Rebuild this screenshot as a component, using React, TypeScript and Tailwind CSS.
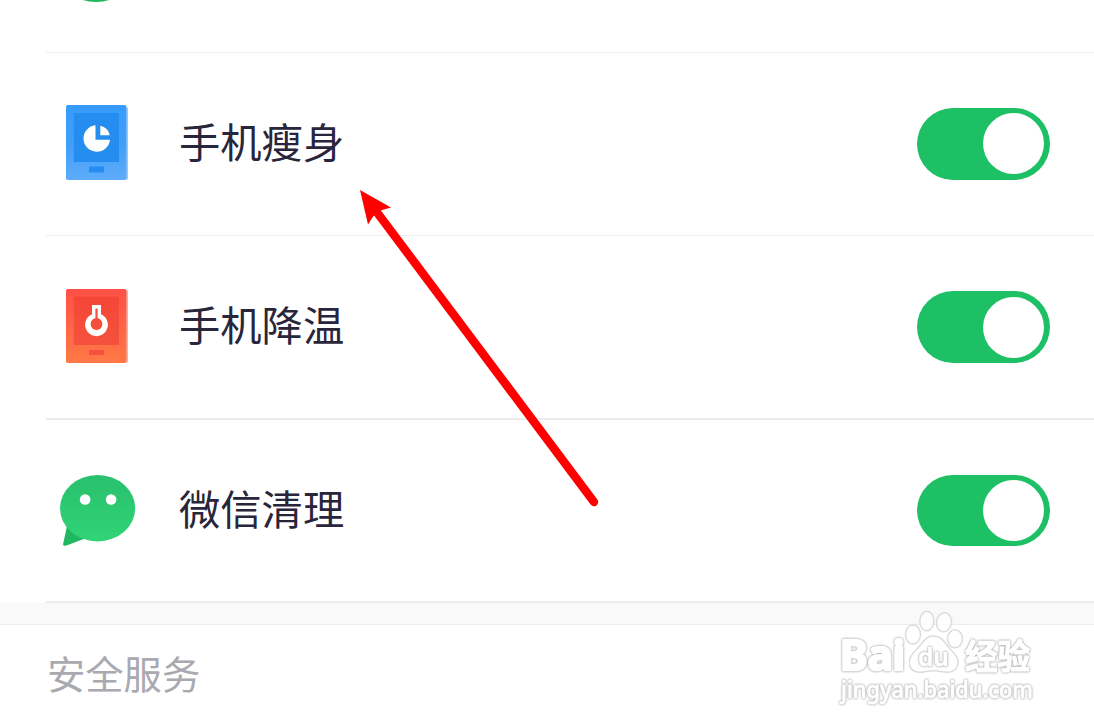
import type { ReactNode } from "react";

function SlimIcon() {
  return (
    <svg className="relative -top-px" width="62" height="75" viewBox="0 0 62 75">
      <defs>
        <linearGradient id="slim" x1="0" y1="0" x2="0" y2="1">
          <stop offset="0" stopColor="#369bfd" />
          <stop offset="0.55" stopColor="#429ffa" />
          <stop offset="1" stopColor="#5eacfa" />
        </linearGradient>
      </defs>
      <rect x="2" y="2" width="60" height="72.5" rx="1.5" fill="#91c7fd" />
      <rect width="60.3" height="75" rx="1.8" fill="url(#slim)" />
      <rect x="7.8" y="8" width="45.2" height="49" fill="#268df0" />
      <rect x="23" y="61.5" width="15" height="6" fill="#268df0" />
      <path d="M29.5 20.2A13.3 13.3 0 1 0 44 34.8H29.5Z" fill="#fff" />
      <path d="M34.3 20.7A11.5 11.5 0 0 1 43.7 30.3H34.3Z" fill="#fff" />
    </svg>
  );
}

function CoolIcon() {
  return (
    <svg className="relative -top-px" width="62" height="74" viewBox="0 0 62 74">
      <defs>
        <linearGradient id="cool" x1="0" y1="0" x2="0" y2="1">
          <stop offset="0" stopColor="#ff5047" />
          <stop offset="1" stopColor="#ff7945" />
        </linearGradient>
        <linearGradient id="coolScreen" x1="0" y1="0" x2="0" y2="1">
          <stop offset="0" stopColor="#f54638" />
          <stop offset="1" stopColor="#f5523d" />
        </linearGradient>
      </defs>
      <rect x="2" y="1" width="60" height="72.5" rx="1.5" fill="#ffaaa0" />
      <rect width="60.3" height="74" rx="1.8" fill="url(#cool)" />
      <rect x="7.8" y="7.5" width="45.2" height="48.5" fill="url(#coolScreen)" />
      <rect x="23" y="61" width="15" height="5" fill="#f5523d" />
      <path d="M26 16H35V25.3A11.4 11.4 0 1 1 26 25.3Z" fill="#fff" />
      <circle cx="30.5" cy="35" r="5.9" fill="#f54e3c" />
      <path d="M30.5 19.5V31" stroke="#f54e3c" strokeWidth="2.2" />
    </svg>
  );
}

function WechatIcon() {
  return (
    <svg className="relative left-px" width="76" height="72" viewBox="0 0 76 72">
      <defs>
        <linearGradient id="chat" x1="0" y1="0" x2="0" y2="1">
          <stop offset="0" stopColor="#29c06c" />
          <stop offset="1" stopColor="#30d477" />
        </linearGradient>
      </defs>
      <path d="M7 51L3 69.5Q3.500 71.500 6.500 70.500L25 63.5Z" fill="#21b660" />
      <ellipse cx="37.6" cy="33.2" rx="37.6" ry="33.2" fill="url(#chat)" />
      <circle cx="25.1" cy="24.5" r="5.3" fill="#fff" />
      <circle cx="51.1" cy="24.5" r="5.3" fill="#fff" />
    </svg>
  );
}

function Toggle({ size = "h-[72px]" }: { size?: string }) {
  return (
    <button
      role="switch"
      aria-checked="true"
      className={`flex w-[133px] shrink-0 items-center justify-end rounded-full bg-[#1dc064] pr-1.5 ${size}`}
    >
      <span className="size-[61px] rounded-full bg-white" />
    </button>
  );
}

interface RowProps {
  icon: ReactNode;
  label: string;
  className: string;
  toggleSize?: string;
}

function Row({ icon, label, className, toggleSize }: RowProps) {
  return (
    <div className={`ml-[46px] flex items-center border-[#ececec] pr-11 ${className}`}>
      <div className="flex w-[102px] shrink-0 justify-center">{icon}</div>
      <span className="ml-[31px] flex-1 pb-2 text-[41.3px] leading-[60px] text-[#29263b]">{label}</span>
      <Toggle size={toggleSize} />
    </div>
  );
}

function Watermark() {
  return (
    <svg className="absolute left-[820px] top-[600px]" width="240" height="120" viewBox="820 600 240 120">
      <g fill="#fff" fillOpacity="0.8" stroke="#dcdcdc" strokeWidth="1.5" strokeLinejoin="round">
        <ellipse cx="913" cy="634.5" rx="7.5" ry="9.5" />
        <ellipse cx="926.8" cy="621" rx="7" ry="9.8" />
        <ellipse cx="944" cy="622.3" rx="7.5" ry="9.6" transform="rotate(8 944 622.3)" />
        <ellipse cx="955" cy="638.8" rx="7.5" ry="9" />
        <path d="M933.5 636C925 636 923 643 917 649C911 655 908.5 659 909.5 664.5C911 672 918 673.5 926 671.5Q933.5 670 941 671.5C949 673.5 957 672 958 663C958.5 657 954 653 950 649C944 642 942 636 933.5 636Z" />
      </g>
      <g
        className="[filter:drop-shadow(0_0_0.8px_#aaa)_drop-shadow(0_0_0.5px_#ccc)]"
        fill="#fff"
        stroke="#fff"
        strokeLinejoin="round"
        fontFamily="'Noto Sans', sans-serif"
      >
        <text x="840" y="670" fontSize="42" fontWeight="700" strokeWidth="2.6" textLength="65" lengthAdjust="spacingAndGlyphs">Bai</text>
        <text x="918" y="666" fontSize="25" fontWeight="600" strokeWidth="0.6" textLength="31" lengthAdjust="spacingAndGlyphs">du</text>
        <text x="965" y="669" fontSize="34" fontWeight="700" strokeWidth="1.2" fontFamily="'Noto Sans CJK SC', sans-serif" textLength="65" lengthAdjust="spacingAndGlyphs">经验</text>
        <text x="841" y="697.5" fontSize="23" fontWeight="500" strokeWidth="0.8" textLength="192" lengthAdjust="spacingAndGlyphs">jingyan.baidu.com</text>
      </g>
    </svg>
  );
}

export default function App() {
  return (
    <main
      lang="zh-CN"
      className="relative h-[728px] w-[1094px] overflow-hidden bg-white font-['Noto_Sans_CJK_SC',sans-serif]"
    >
      <div className="ml-[46px] h-[53px] border-b border-[#ececec]">
        <svg className="ml-[27px]" width="46" height="3" viewBox="0 0 46 3">
          <ellipse cx="23" cy="-30" rx="38" ry="32" fill="#1eb856" />
        </svg>
      </div>
      <Row icon={<SlimIcon />} label="手机瘦身" className="h-[183px] border-b pb-px" />
      <Row icon={<CoolIcon />} label="手机降温" className="h-[184px] border-b-2" />
      <Row icon={<WechatIcon />} label="微信清理" className="h-[183px] border-b-2" toggleSize="h-[71px]" />
      <div className="h-[22px] border-b border-[#ececec] bg-[#f9f9f9]" />
      <h2 className="ml-[47px] mt-5 text-[38.3px] font-normal leading-[56px] text-[#a9a9af]">安全服务</h2>
      <Watermark />
      <svg className="pointer-events-none absolute left-0 top-0" width="620" height="520" viewBox="0 0 620 520">
        <path d="M376 211L594 502" stroke="#f00" strokeWidth="8.5" strokeLinecap="round" />
        <path d="M360 190L391 207.5L380.5 210.5L373.5 216L368 224.5Z" fill="#f00" />
      </svg>
    </main>
  );
}
